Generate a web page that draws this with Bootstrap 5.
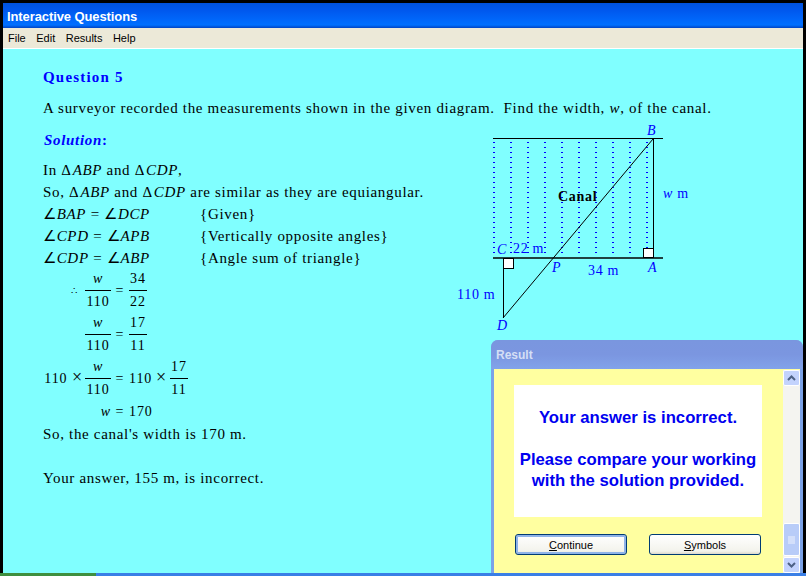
<!DOCTYPE html>
<html lang="en">
<head>
    <meta charset="UTF-8">
    <title>Interactive Questions</title>
    <link href="https://cdn.jsdelivr.net/npm/bootstrap@5.3.3/dist/css/bootstrap.min.css" rel="stylesheet">
    <style>
        html, body { height: 576px; overflow: hidden; background: #000; }
        body { font-family: "Liberation Serif", serif; font-size: 15px; line-height: 22px; color: #000; }
        .app { height: 570px; margin: 3px 3px 0; position: relative; }
        .title-bar { height: 25px; padding-left: 4px; color: #fff; font: bold 13px/27px "Liberation Sans", sans-serif; letter-spacing: -.1px;
            background: linear-gradient(#0052dd, #0058ee 30%, #0068fb 70%, #0070ff 88%, #0044c4); }
        .menu-bar { height: 21px; background: #ece9d8; border-bottom: 1px solid #fff; padding-left: 5px; gap: 10.5px;
            font: 11px/20px "Liberation Sans", sans-serif; }
        .content { background: #80ffff; height: 524px; padding: 17px 0 0 40px; letter-spacing: .68px; }
        .heading { color: #0000ff; font-weight: bold; }
        .heading.q-title { letter-spacing: 1.2px; }
        .q-line { margin: 9px 0 1px; }
        .solution-col { width: 397px; padding-top: 9px; }
        .solution-head { margin-bottom: 8px; padding-left: 1px; }
        .tri { margin-right: 1px; }
        .angle-col { width: 157px; }
        .eq { height: 44px; font-size: 14px; letter-spacing: .9px; }
        .eq-left { width: 42px; padding-right: 2px; text-align: right; }
        .therefore { font-size: 10px; padding-right: 7px; }
        .times { font-size: 18px; line-height: 14px; }
        .frac { width: 26px; text-align: center; }
        .frac-wide { width: 18px; }
        .frac .num { height: 22px; line-height: 20px; border-bottom: 1px solid #000; }
        .op { width: 18px; text-align: center; }
        .op-x { width: 17px; text-align: center; }
        .num-110 { width: 24px; }
        .blank-line { height: 22px; }
        .diagram { flex-shrink: 0; }
        .diagram text { font-family: "Liberation Serif", serif; font-size: 14px; fill: #0000ff; letter-spacing: .7px; }
        .diagram text.canal { fill: #000; font-weight: bold; }
        .diagram text.pt { font-style: italic; }
        .dialog { position: absolute; left: 488px; top: 337px; width: 312px; height: 233px; background: #7ba2e7; border-radius: 7px 7px 0 0; }
        .dialog-title { height: 29px; padding-left: 5px; color: #d5dff5; font: bold 12px/30px "Liberation Sans", sans-serif; border-radius: 7px 7px 0 0;
            background: linear-gradient(#7a96df, #7b96e0 50%, #82a3ea); }
        .dialog-body { height: 204px; margin: 0 3px; background: #ffffa0; }
        .dialog-main { width: 289px; padding: 16px 21px 0 20px; }
        .msg { height: 132px; background: #fff; color: #0000f0; font: bold 16.7px/21px "Liberation Sans", sans-serif; padding-top: 22px; }
        .msg p { margin: 0 0 21px; }
        .btn-row { margin-top: 17px; padding: 0 1px; }
        .xp-btn { width: 112px; height: 21px; padding: 0; border: 1px solid #003c74; border-radius: 3px; color: #000; font: 11px/18px "Liberation Sans", sans-serif;
            background: linear-gradient(#fff, #f3f3ec 85%, #dcd8cc); }
        .xp-btn.default { box-shadow: inset 0 0 0 2px #8fb3e8; }
        .scroll { width: 17px; margin-top: 1px; background: #f4f4f0; }
        .sb-btn { height: 16px; border: 1px solid #fff; border-radius: 2px; background: #c3d3fd; }
        .sb-thumb { height: 33px; margin-top: 137px; margin-bottom: 1px; border: 1px solid #fff; border-radius: 2px; background: #b8ccf8; }
        .taskbar { height: 3px; background: #3a7fe6; }
        .taskbar .start { width: 96px; background: #3f8f3f; }
    </style>
</head>
<body>
<div class="app d-flex flex-column">
    <div class="title-bar">Interactive Questions</div>
    <div class="menu-bar d-flex">
        <span>File</span><span>Edit</span><span>Results</span><span>Help</span>
    </div>

    <div class="content">
        <div class="heading q-title">Question 5</div>
        <div class="q-line">A surveyor recorded the measurements shown in the given diagram.&nbsp; Find the width, <i>w</i>, of the canal.</div>

        <div class="d-flex">
            <div class="solution-col">
                <div class="heading solution-head"><i>Solution</i>:</div>
                <div>In <span class="tri">&Delta;</span><i>ABP</i> and <span class="tri">&Delta;</span><i>CDP</i>,</div>
                <div>So, <span class="tri">&Delta;</span><i>ABP</i> and <span class="tri">&Delta;</span><i>CDP</i> are similar as they are equiangular.</div>
                <div class="d-flex"><div class="angle-col">&ang;<i>BAP</i> = &ang;<i>DCP</i></div><div>{Given}</div></div>
                <div class="d-flex"><div class="angle-col">&ang;<i>CPD</i> = &ang;<i>APB</i></div><div>{Vertically opposite angles}</div></div>
                <div class="d-flex"><div class="angle-col">&ang;<i>CDP</i> = &ang;<i>ABP</i></div><div>{Angle sum of triangle}</div></div>

                <div class="eq d-flex">
                    <div class="eq-left therefore align-self-center">&there4;</div>
                    <div class="frac"><div class="num"><i>w</i></div><div>110</div></div>
                    <div class="op align-self-center">=</div>
                    <div class="frac frac-wide"><div class="num">34</div><div>22</div></div>
                </div>
                <div class="eq d-flex">
                    <div class="eq-left"></div>
                    <div class="frac"><div class="num"><i>w</i></div><div>110</div></div>
                    <div class="op align-self-center">=</div>
                    <div class="frac frac-wide"><div class="num">17</div><div>11</div></div>
                </div>
                <div class="eq d-flex">
                    <div class="eq-left align-self-center">110&nbsp;<span class="times">&times;</span></div>
                    <div class="frac"><div class="num"><i>w</i></div><div>110</div></div>
                    <div class="op align-self-center">=</div>
                    <div class="num-110 align-self-center">110</div>
                    <div class="op-x align-self-center"><span class="times">&times;</span></div>
                    <div class="frac frac-wide"><div class="num">17</div><div>11</div></div>
                </div>
                <div class="eq d-flex h-auto">
                    <div class="eq-left"></div>
                    <div class="frac text-end"><i>w</i></div>
                    <div class="op">=</div>
                    <div>170</div>
                </div>
                <div>So, the canal's width is 170 m.</div>
                <div class="blank-line"></div>
                <div>Your answer, 155 m, is incorrect.</div>
            </div>

            <svg class="diagram" width="260" height="215" viewBox="440 120 260 215">
                <g stroke="#0000ff" stroke-width="2" stroke-dasharray="1 4">
                    <line x1="494" y1="142" x2="494" y2="256"/><line x1="511" y1="142" x2="511" y2="256"/>
                    <line x1="528" y1="142" x2="528" y2="256"/><line x1="545" y1="142" x2="545" y2="256"/>
                    <line x1="562" y1="142" x2="562" y2="256"/><line x1="579" y1="142" x2="579" y2="256"/>
                    <line x1="596" y1="142" x2="596" y2="256"/><line x1="613" y1="142" x2="613" y2="256"/>
                    <line x1="630" y1="142" x2="630" y2="256"/><line x1="647" y1="142" x2="647" y2="256"/>
                </g>
                <rect x="643.5" y="248.5" width="10" height="9" fill="#fff" stroke="#000"/>
                <rect x="503.5" y="258.5" width="10" height="10" fill="#fff" stroke="#000"/>
                <g stroke="#000" fill="none">
                    <line x1="493" y1="138.5" x2="663" y2="138.5"/>
                    <line x1="493" y1="258" x2="663" y2="258" stroke-width="1.6"/>
                    <line x1="653.5" y1="139" x2="653.5" y2="258"/>
                    <line x1="503.5" y1="258" x2="503.5" y2="318"/>
                    <line x1="653" y1="139" x2="503" y2="318"/>
                </g>
                <text class="canal" x="558" y="201">Canal</text>
                <text class="pt" x="647" y="135">B</text>
                <text class="pt" x="497" y="254">C</text>
                <text x="513" y="253">22 m</text>
                <text class="pt" x="552" y="272">P</text>
                <text x="588" y="275">34 m</text>
                <text class="pt" x="648" y="272">A</text>
                <text x="457" y="299">110 m</text>
                <text class="pt" x="497" y="330">D</text>
                <text x="663" y="198"><tspan font-style="italic">w</tspan> m</text>
            </svg>
        </div>
    </div>

    <div class="dialog">
        <div class="dialog-title">Result</div>
        <div class="dialog-body d-flex">
            <div class="dialog-main">
                <div class="msg text-center">
                    <p>Your answer is incorrect.</p>
                    Please compare your working<br>with the solution provided.
                </div>
                <div class="btn-row d-flex justify-content-between">
                    <button type="button" class="btn xp-btn default"><u>C</u>ontinue</button>
                    <button type="button" class="btn xp-btn"><u>S</u>ymbols</button>
                </div>
            </div>
            <div class="scroll d-flex flex-column">
                <div class="sb-btn d-flex align-items-center justify-content-center">
                    <svg width="9" height="6" viewBox="0 0 9 6"><path d="M1 5l3.5-3.5L8 5" fill="none" stroke="#4d6185" stroke-width="2"/></svg>
                </div>
                <div class="sb-thumb d-flex align-items-center justify-content-center">
                    <svg width="7" height="8" viewBox="0 0 7 8"><path d="M0 1h7M0 3h7M0 5h7M0 7h7" stroke="#eef2fd" stroke-width="1"/></svg>
                </div>
                <div class="sb-btn d-flex align-items-center justify-content-center">
                    <svg width="9" height="6" viewBox="0 0 9 6"><path d="M1 1l3.5 3.5L8 1" fill="none" stroke="#4d6185" stroke-width="2"/></svg>
                </div>
            </div>
        </div>
    </div>
</div>
<div class="taskbar d-flex"><div class="start"></div></div>
<script src="https://cdn.jsdelivr.net/npm/bootstrap@5.3.3/dist/js/bootstrap.bundle.min.js"></script>
</body>
</html>
